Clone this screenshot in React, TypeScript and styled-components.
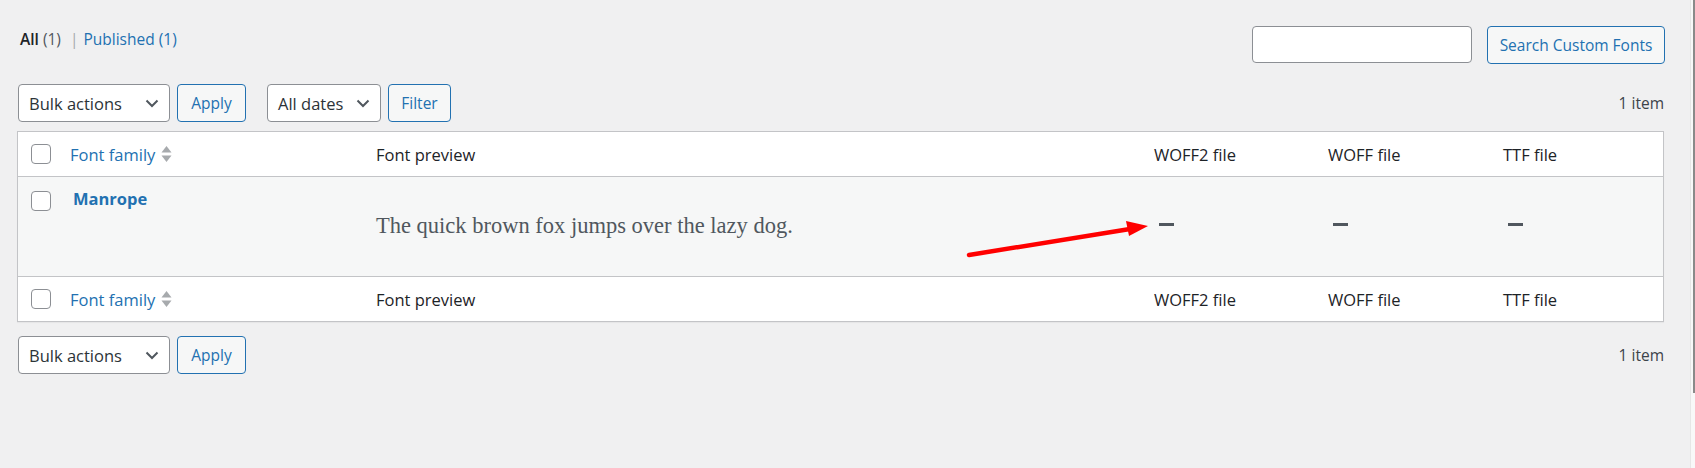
import React from 'react';
import styled, { createGlobalStyle } from 'styled-components';

const GlobalStyle = createGlobalStyle`
  html, body {
    margin: 0;
    padding: 0;
    background: #f0f0f1;
    overflow: hidden;
  }
  body {
    font-family: "Open Sans", "Noto Sans", Arial, sans-serif;
    font-size: 15px;
    color: #3c434a;
  }
`;

const Page = styled.div`
  display: flex;
  width: 1695px;
  height: 468px;
`;

const Main = styled.div`
  position: relative;
  flex: 1;
  padding: 0 26px 0 17px;
`;

const ScrollStrip = styled.div`
  width: 4px;
  background: #f8f8f8;
  border-left: 1px solid #e6e6e6;
  display: flex;
  justify-content: flex-end;
`;

const ScrollThumb = styled.div`
  width: 2px;
  height: 393px;
  background: #8a8a8a;
`;

const TopBar = styled.div`
  display: flex;
  justify-content: space-between;
  align-items: flex-start;
  padding-top: 26px;
`;

const Views = styled.ul`
  list-style: none;
  margin: 0;
  padding: 0 0 0 3px;
  display: flex;
  align-items: center;
  height: 26px;
  font-size: 15.5px;
  color: #50575e;
`;

const ViewItem = styled.li<{ $current?: boolean }>`
  color: ${(p) => (p.$current ? '#1d2327' : '#2271b1')};
  font-weight: ${(p) => (p.$current ? 600 : 400)};
`;

const Count = styled.span<{ $link?: boolean }>`
  font-weight: 400;
  color: ${(p) => (p.$link ? '#2271b1' : '#50575e')};
`;

const Sep = styled.span`
  color: #a7aaad;
  margin: 0 5px 0 9px;
`;

const SearchBox = styled.div`
  display: flex;
  gap: 15px;
  margin-right: -1px;
`;

const SearchInput = styled.input`
  box-sizing: border-box;
  width: 220px;
  height: 37px;
  border: 1px solid #8c8f94;
  border-radius: 4px;
  background: #fff;
  padding: 0 10px;
  font: inherit;
`;

const Button = styled.button<{ $w: number }>`
  box-sizing: border-box;
  width: ${(p) => p.$w}px;
  height: 38px;
  border: 1px solid #2271b1;
  border-radius: 4px;
  background: #f6f7f7;
  color: #2271b1;
  font-family: inherit;
  font-size: 15.5px;
  padding: 0;
  cursor: pointer;
`;

const TableNav = styled.div<{ $top?: boolean }>`
  display: flex;
  align-items: center;
  margin: ${(p) => (p.$top ? '20px 0 9px 1px' : '14px 0 0 1px')};
  height: 38px;
`;

const Actions = styled.div<{ $gap?: number }>`
  display: flex;
  gap: 7px;
  margin-right: ${(p) => p.$gap ?? 0}px;
`;

const Select = styled.div<{ $w: number }>`
  box-sizing: border-box;
  width: ${(p) => p.$w}px;
  height: 38px;
  border: 1px solid #8c8f94;
  border-radius: 4px;
  background: #fff;
  color: #2c3338;
  display: flex;
  align-items: center;
  justify-content: space-between;
  padding: 0 10px 0 10px;
  font-size: 16.5px;
`;

const Chevron = () => (
  <svg width="14" height="9" viewBox="0 0 14 9">
    <path d="M1.5 1.5 L7 7 L12.5 1.5" fill="none" stroke="#50575e" strokeWidth="2" />
  </svg>
);

const ItemCount = styled.div`
  margin-left: auto;
  color: #3c434a;
  font-size: 15.5px;
`;

const Table = styled.div`
  background: #fff;
  border: 1px solid #c3c4c7;
  box-shadow: 0 1px 1px rgba(0, 0, 0, 0.04);
`;

const Row = styled.div<{ $body?: boolean; $border?: boolean }>`
  display: grid;
  grid-template-columns: 40px 306px 778px 174px 175px 1fr;
  min-height: ${(p) => (p.$body ? 99 : 44)}px;
  background: ${(p) => (p.$body ? '#f6f7f7' : '#fff')};
  border-bottom: ${(p) => (p.$border ? '1px solid #c3c4c7' : 'none')};
`;

const Cell = styled.div<{ $top?: boolean }>`
  display: flex;
  align-items: ${(p) => (p.$top ? 'flex-start' : 'center')};
  padding: ${(p) => (p.$top ? '11px 12px 0' : '0 12px')};
  color: #1d2327;
  font-size: 16.5px;
`;

const CheckCell = styled.div<{ $top?: boolean }>`
  display: flex;
  align-items: ${(p) => (p.$top ? 'flex-start' : 'center')};
  padding: ${(p) => (p.$top ? '14px 0 0 13px' : '0 0 0 13px')};
`;

const Checkbox = styled.span`
  box-sizing: border-box;
  width: 20px;
  height: 20px;
  border: 1px solid #8c8f94;
  border-radius: 4px;
  background: #fff;
`;

const SortLink = styled.a`
  display: flex;
  align-items: center;
  gap: 6px;
  color: #2271b1;
  text-decoration: none;
`;

const SortIcon = () => (
  <svg width="11" height="18" viewBox="0 0 11 18">
    <path d="M5.5 1 L10.5 7.5 L0.5 7.5 Z" fill="#a7aaad" />
    <path d="M0.5 10.5 L10.5 10.5 L5.5 17 Z" fill="#a7aaad" />
  </svg>
);

const RowTitle = styled.a`
  color: #2271b1;
  font-weight: 700;
  font-size: 16.5px;
  margin-left: 3px;
  text-decoration: none;
  line-height: 1.3;
`;

const Preview = styled.span`
  font-family: "Liberation Serif", "Times New Roman", serif;
  font-size: 22.5px;
  color: #50575e;
  margin-top: -2px;
`;

const Dash = styled.span`
  display: block;
  width: 15px;
  height: 3px;
  margin: 0 0 4px 5px;
  background: #50575e;
`;

const Arrow = styled.svg`
  position: absolute;
  left: 960px;
  top: 213px;
`;

const HeaderRow = () => (
  <>
    <CheckCell>
      <Checkbox />
    </CheckCell>
    <Cell>
      <SortLink href="#">
        Font family <SortIcon />
      </SortLink>
    </Cell>
    <Cell>Font preview</Cell>
    <Cell>WOFF2 file</Cell>
    <Cell>WOFF file</Cell>
    <Cell>TTF file</Cell>
  </>
);

const BulkActions = ({ gap }: { gap?: number }) => (
  <Actions $gap={gap}>
    <Select $w={152}>
      Bulk actions <Chevron />
    </Select>
    <Button $w={69}>Apply</Button>
  </Actions>
);

export default function App() {
  return (
    <Page>
      <GlobalStyle />
      <Main>
        <TopBar>
          <Views>
            <ViewItem $current>
              All <Count>(1)</Count>
            </ViewItem>
            <Sep>|</Sep>
            <ViewItem>
              Published <Count $link>(1)</Count>
            </ViewItem>
          </Views>
          <SearchBox>
            <SearchInput type="search" aria-label="Search" />
            <Button $w={178}>Search Custom Fonts</Button>
          </SearchBox>
        </TopBar>

        <TableNav $top>
          <BulkActions gap={21} />
          <Actions>
            <Select $w={114}>
              All dates <Chevron />
            </Select>
            <Button $w={63}>Filter</Button>
          </Actions>
          <ItemCount>1 item</ItemCount>
        </TableNav>

        <Table>
          <Row $border>
            <HeaderRow />
          </Row>
          <Row $body $border>
            <CheckCell $top>
              <Checkbox />
            </CheckCell>
            <Cell $top>
              <RowTitle href="#">Manrope</RowTitle>
            </Cell>
            <Cell>
              <Preview>The quick brown fox jumps over the lazy dog.</Preview>
            </Cell>
            <Cell>
              <Dash aria-label="—" />
            </Cell>
            <Cell>
              <Dash aria-label="—" />
            </Cell>
            <Cell>
              <Dash aria-label="—" />
            </Cell>
          </Row>
          <Row>
            <HeaderRow />
          </Row>
        </Table>

        <TableNav>
          <BulkActions />
          <ItemCount>1 item</ItemCount>
        </TableNav>

        <Arrow width="200" height="54" viewBox="0 0 200 54">
          <line x1="9" y1="42" x2="170" y2="16" stroke="#ff0000" strokeWidth="4.5" strokeLinecap="round" />
          <polygon points="188,13 166,8 169,23" fill="#ff0000" />
        </Arrow>
      </Main>
      <ScrollStrip>
        <ScrollThumb />
      </ScrollStrip>
    </Page>
  );
}
